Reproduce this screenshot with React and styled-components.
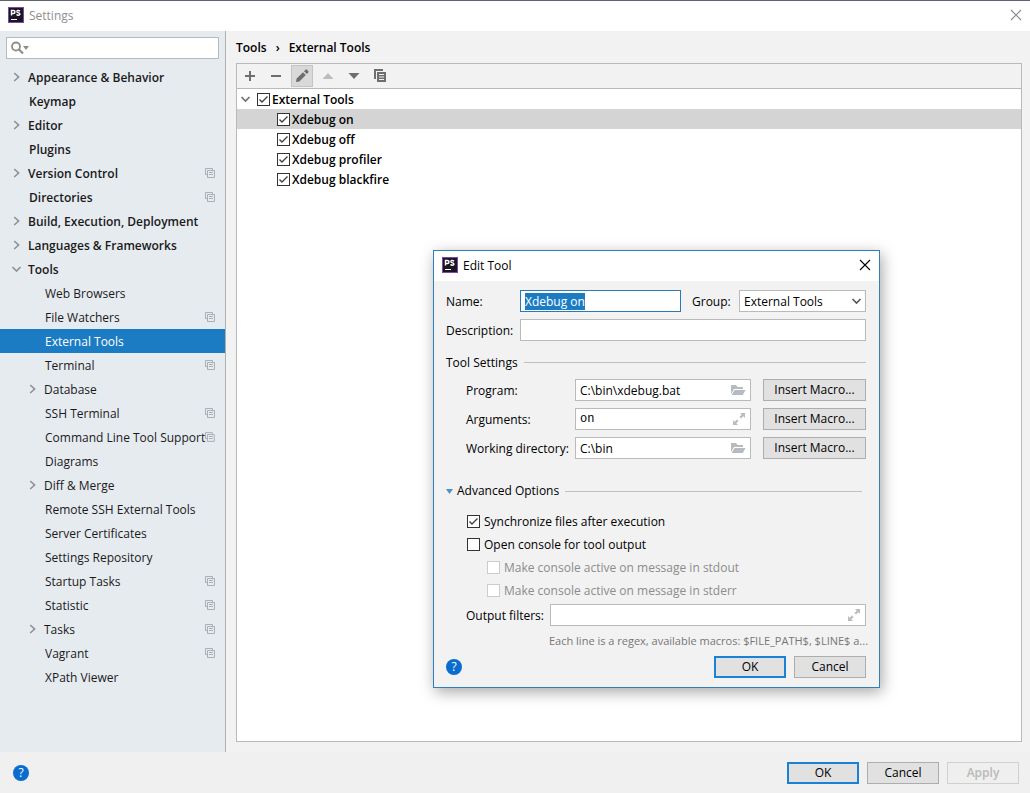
import React, { useState } from "react";
import styled, { createGlobalStyle, css } from "styled-components";

const GlobalStyle = createGlobalStyle`
  * {
    box-sizing: border-box;
  }
  body {
    margin: 0;
    background: #f0f0f0;
  }
  body, button, input, select {
    font-family: "Open Sans", "Noto Sans", sans-serif;
    font-size: 12px;
    line-height: 17px;
    color: #000000;
  }
  button {
    line-height: 16px;
  }
`;

const checkMark =
  "url(\"data:image/svg+xml,%3Csvg xmlns='http://www.w3.org/2000/svg' width='11' height='11'%3E%3Cpath d='M1.5 5.5L4 8L9.5 2.5' fill='none' stroke='%23404040' stroke-width='1.4'/%3E%3C/svg%3E\")";

const Window = styled.div`
  display: flex;
  flex-direction: column;
  min-height: 100vh;
  position: relative;
  border-top: 1px solid #5f6273;
`;

const TitleBar = styled.header`
  display: flex;
  align-items: center;
  gap: 5px;
  height: 30px;
  padding: 0 8px 2px;
  background: #ffffff;
  color: ${(props) => (props.$active ? "#000000" : "#8f8f8f")};
`;

const Title = styled.h1`
  flex: 1;
  margin: 0;
  font-size: 12px;
  font-weight: 400;
`;

const IconButton = styled.button`
  display: flex;
  align-items: center;
  justify-content: center;
  padding: 0;
  border: none;
  background: none;
`;

const Body = styled.div`
  display: flex;
  flex: 1;
`;

const Sidebar = styled.nav`
  flex: none;
  width: 226px;
  background: #e6ebf0;
  border-right: 1px solid #b0b0b0;
`;

const SearchBox = styled.div`
  display: flex;
  align-items: center;
  height: 22px;
  margin: 6px;
  padding-left: 4px;
  border: 1px solid #b4b8bf;
  background: #ffffff;
`;

const SearchInput = styled.input`
  flex: 1;
  min-width: 0;
  border: none;
  outline: none;
  background: none;
`;

const TreeList = styled.ul`
  list-style: none;
  margin: 0;
  padding: 0;
`;

const TreeItem = styled.li`
  display: flex;
  align-items: center;
  height: 24px;
  padding-left: ${(props) => (props.$level === 2 ? 26 : 10)}px;
  padding-right: 10px;
  font-weight: ${(props) => (props.$level === 2 ? 400 : 600)};
  white-space: nowrap;
  color: #1a1a1a;
  ${(props) =>
    props.$selected &&
    css`
      background: #1b7cc4;
      color: #ffffff;
    `}
`;

const TreeArrow = styled.span`
  display: flex;
  flex: none;
  width: ${(props) => (props.$leaf ? 19 : 18)}px;
`;

const TreeLabel = styled.span`
  flex: 1;
`;

const Content = styled.main`
  display: flex;
  flex-direction: column;
  flex: 1;
  padding: 8px 8px 10px 10px;
  background: #f2f2f2;
`;

const Breadcrumb = styled.div`
  display: flex;
  align-items: center;
  gap: 9px;
  height: 16px;
  margin-bottom: 8px;
  font-weight: 600;
`;

const Panel = styled.section`
  flex: 1;
  border: 1px solid #b9b9b9;
  background: #ffffff;
`;

const Toolbar = styled.div`
  display: flex;
  align-items: center;
  gap: 4px;
  height: 25px;
  padding: 0 2px;
  border-bottom: 1px solid #b9b9b9;
  background: #f2f2f2;
`;

const ToolButton = styled(IconButton)`
  width: 22px;
  height: 22px;
  ${(props) =>
    props.$pressed &&
    css`
      border: 1px solid #c4c4c4;
      background: #d9d9d9;
    `}
`;

const ToolRow = styled.div`
  display: flex;
  align-items: center;
  height: 20px;
  padding-left: ${(props) => (props.$child ? 40 : 2)}px;
  background: ${(props) => (props.$selected ? "#d4d4d4" : "none")};
  font-weight: 600;
`;

const RowArrow = styled.span`
  display: flex;
  width: 18px;
`;

const CheckLabel = styled.label`
  display: flex;
  align-items: center;
  gap: ${(props) => props.$gap || 2}px;
  padding-left: ${(props) => (props.$indent ? 20 : 0)}px;
  color: ${(props) => (props.$disabled ? "#8c8c8c" : "inherit")};
`;

const Checkbox = styled.input`
  appearance: none;
  flex: none;
  width: 13px;
  height: 13px;
  margin: 0;
  border: 1px solid #333333;
  background: #ffffff;
  &:checked {
    background: #ffffff ${checkMark} no-repeat center;
  }
  &:disabled {
    border-color: #cccccc;
  }
`;

const Footer = styled.footer`
  display: flex;
  align-items: center;
  gap: 8px;
  height: 41px;
  padding: 0 11px 0 13px;
  background: #f0f0f0;
`;

const HelpButton = styled.button`
  width: 16px;
  height: 16px;
  margin-right: auto;
  padding: 0;
  border: none;
  border-radius: 50%;
  background: #0a6cce;
  color: #ffffff;
`;

const Button = styled.button`
  width: ${(props) => (props.$wide ? 103 : 72)}px;
  height: 22px;
  padding: 0;
  border: ${(props) => (props.$primary ? "2px solid #1a82d4" : "1px solid #adadad")};
  background: #e1e1e1;
  &:disabled {
    border-color: #d0d0d0;
    background: #efefef;
    color: #b9b9b9;
    font-weight: 600;
  }
`;

const Dialog = styled.div`
  position: absolute;
  left: 433px;
  top: 249px;
  width: 447px;
  border: 1px solid #2f7fbd;
  background: #f2f2f2;
  box-shadow: 2px 4px 14px rgba(0, 0, 0, 0.35);
`;

const DialogForm = styled.form`
  padding: 9px 13px 9px 12px;
`;

const FormRow = styled.div`
  display: grid;
  grid-template-columns: ${(props) => props.$columns};
  align-items: center;
  height: 22px;
  margin-bottom: 7px;
  padding-left: ${(props) => (props.$indent ? 20 : 0)}px;
  white-space: nowrap;
`;

const GroupLabel = styled.label`
  padding-left: 11px;
`;

const MacroCell = styled.div`
  display: flex;
  justify-content: flex-end;
`;

const SectionTitle = styled.div`
  display: flex;
  align-items: center;
  gap: 6px;
  height: 16px;
  margin: ${(props) => (props.$advanced ? "24px 4px 14px 0" : "13px 0 9px")};
  &::after {
    content: "";
    flex: 1;
    border-top: 1px solid #c0c0c0;
  }
`;

const SectionToggle = styled(IconButton)`
  gap: 4px;
`;

const Field = styled.div`
  display: flex;
  align-items: center;
  min-width: 0;
  height: 22px;
  padding-right: 4px;
  border: 1px solid ${(props) => (props.$focused ? "#2b7ab8" : "#bababa")};
  background: #ffffff;
  svg {
    flex: none;
  }
`;

const TextInput = styled.input`
  flex: 1;
  min-width: 0;
  padding: 0 4px;
  border: none;
  outline: none;
  background: none;
  font-family: ${(props) => (props.$mono ? '"Liberation Mono", monospace' : '"Open Sans", "Noto Sans", sans-serif')};
  &::selection {
    background: #1b7cc4;
    color: #ffffff;
  }
`;

const SelectWrap = styled.div`
  display: grid;
  align-items: center;
  position: relative;
  svg {
    position: absolute;
    right: 4px;
    pointer-events: none;
  }
`;

const Select = styled.select`
  appearance: none;
  height: 22px;
  padding: 0 4px;
  border: 1px solid #bababa;
  border-radius: 0;
  background: #ffffff;
`;

const OptionList = styled.div`
  display: grid;
  grid-auto-rows: 16px;
  gap: 7px;
  margin-bottom: 6px;
  padding-left: 21px;
`;

const Hint = styled.p`
  height: 16px;
  margin: -1px 0 8px 103px;
  white-space: nowrap;
  font-size: 11px;
  color: #777777;
`;

const DialogActions = styled.div`
  display: flex;
  align-items: center;
  gap: 8px;
`;

const AppLogo = () => (
  <svg width="16" height="16" viewBox="0 0 16 16">
    <rect width="16" height="16" fill="#7b4aa8" />
    <rect x="1" y="1" width="14" height="14" fill="#1c1524" />
    <path
      d="M3.5 8.5V3.5H5.5Q7 3.5 7 5T5.5 6.5H3.5M12 4.2Q11 3.3 9.8 3.5T9 5Q9.3 5.7 10.5 5.9T12 7.2Q11.8 8.2 10.4 8.2T8.6 7.4"
      fill="none"
      stroke="#ffffff"
      strokeWidth="1.4"
    />
    <rect x="3" y="12" width="6" height="1" fill="#ffffff" />
  </svg>
);

const CloseIcon = ({ color }) => (
  <svg width="12" height="12" viewBox="0 0 12 12">
    <path d="M1 1L11 11M11 1L1 11" stroke={color} strokeWidth="1.1" />
  </svg>
);

const Chevron = ({ open, color = "#8c9196" }) => (
  <svg width="12" height="12" viewBox="0 0 12 12">
    <path
      d={open ? "M2.5 4L6.5 8L10.5 4" : "M4.2 2L8.6 6L4.2 10"}
      fill="none"
      stroke={color}
      strokeWidth="1.6"
    />
  </svg>
);

const CopyIcon = () => (
  <svg width="10" height="10" viewBox="0 0 10 10">
    <path
      d="M2.5 6.5H0.5V0.5H7.5V2.5M2.5 2.5H9.5V9.5H2.5ZM4 4.5H8M4 6.5H8"
      fill="none"
      stroke="#a9afb5"
      strokeWidth="1"
    />
  </svg>
);

const SearchIcon = () => (
  <svg width="20" height="14" viewBox="0 0 20 14">
    <circle cx="5" cy="5.5" r="4" fill="none" stroke="#8c8c8c" strokeWidth="1.8" />
    <path d="M8 8.5L12 12.5" stroke="#8c8c8c" strokeWidth="2.2" />
    <path d="M12 5H18L15 9Z" fill="#8c8c8c" />
  </svg>
);

const ToolIcon = ({ children }) => (
  <svg width="16" height="16" viewBox="0 0 16 16" fill="#6e6e6e">
    {children}
  </svg>
);

const FolderIcon = () => (
  <svg width="16" height="14" viewBox="0 0 16 14" fill="#b5bbc0">
    <path d="M1 2H6L7.5 4H13V6H4L1 11Z" />
    <path d="M4.5 7H15.5L12.8 12H1.6Z" />
  </svg>
);

const ExpandIcon = () => (
  <svg width="14" height="14" viewBox="0 0 14 14" fill="#b9bdc1">
    <path d="M8 1H13V6L11.3 4.3L9 6.6L7.4 5L9.7 2.7Z" />
    <path d="M6 13H1V8L2.7 9.7L5 7.4L6.6 9L4.3 11.3Z" />
  </svg>
);

const settings = [
  { label: "Appearance & Behavior", arrow: "closed" },
  { label: "Keymap" },
  { label: "Editor", arrow: "closed" },
  { label: "Plugins" },
  { label: "Version Control", arrow: "closed", project: true },
  { label: "Directories", project: true },
  { label: "Build, Execution, Deployment", arrow: "closed" },
  { label: "Languages & Frameworks", arrow: "closed" },
  { label: "Tools", arrow: "open" },
  { label: "Web Browsers", level: 2 },
  { label: "File Watchers", level: 2, project: true },
  { label: "External Tools", level: 2, selected: true },
  { label: "Terminal", level: 2, project: true },
  { label: "Database", level: 2, arrow: "closed" },
  { label: "SSH Terminal", level: 2, project: true },
  { label: "Command Line Tool Support", level: 2, project: true },
  { label: "Diagrams", level: 2 },
  { label: "Diff & Merge", level: 2, arrow: "closed" },
  { label: "Remote SSH External Tools", level: 2 },
  { label: "Server Certificates", level: 2 },
  { label: "Settings Repository", level: 2 },
  { label: "Startup Tasks", level: 2, project: true },
  { label: "Statistic", level: 2, project: true },
  { label: "Tasks", level: 2, arrow: "closed", project: true },
  { label: "Vagrant", level: 2, project: true },
  { label: "XPath Viewer", level: 2 },
];

const tools = ["Xdebug on", "Xdebug off", "Xdebug profiler", "Xdebug blackfire"];

const toolFields = [
  { id: "program", label: "Program:", value: "C:\\bin\\xdebug.bat", icon: <FolderIcon /> },
  { id: "arguments", label: "Arguments:", value: "on", icon: <ExpandIcon />, mono: true },
  { id: "directory", label: "Working directory:", value: "C:\\bin", icon: <FolderIcon /> },
];

const EditToolDialog = () => {
  const [name, setName] = useState("Xdebug on");
  const [sync, setSync] = useState(true);
  const [openConsole, setOpenConsole] = useState(false);

  return (
    <Dialog role="dialog" aria-label="Edit Tool">
      <TitleBar $active>
        <AppLogo />
        <Title as="h2">Edit Tool</Title>
        <IconButton aria-label="Close dialog">
          <CloseIcon color="#000000" />
        </IconButton>
      </TitleBar>
      <DialogForm onSubmit={(event) => event.preventDefault()}>
        <FormRow $columns="74px minmax(0, 1fr) 58px 127px">
          <label htmlFor="name">Name:</label>
          <Field $focused>
            <TextInput
              id="name"
              autoFocus
              value={name}
              onFocus={(event) => event.target.select()}
              onChange={(event) => setName(event.target.value)}
            />
          </Field>
          <GroupLabel htmlFor="group">Group:</GroupLabel>
          <SelectWrap>
            <Select id="group">
              <option>External Tools</option>
            </Select>
            <Chevron open color="#555555" />
          </SelectWrap>
        </FormRow>
        <FormRow $columns="74px minmax(0, 1fr)">
          <label htmlFor="description">Description:</label>
          <Field>
            <TextInput id="description" />
          </Field>
        </FormRow>
        <SectionTitle>Tool Settings</SectionTitle>
        {toolFields.map((field) => (
          <FormRow key={field.id} $indent $columns="109px minmax(0, 1fr) 115px">
            <label htmlFor={field.id}>{field.label}</label>
            <Field>
              <TextInput id={field.id} defaultValue={field.value} $mono={field.mono} />
              {field.icon}
            </Field>
            <MacroCell>
              <Button type="button" $wide>
                Insert Macro...
              </Button>
            </MacroCell>
          </FormRow>
        ))}
        <SectionTitle $advanced>
          <SectionToggle type="button">
            <svg width="7" height="5" viewBox="0 0 7 5">
              <path d="M0 0H7L3.5 5Z" fill="#4a93c4" />
            </svg>
            Advanced Options
          </SectionToggle>
        </SectionTitle>
        <OptionList>
          <CheckLabel $gap={4}>
            <Checkbox
              type="checkbox"
              checked={sync}
              onChange={(event) => setSync(event.target.checked)}
            />
            Synchronize files after execution
          </CheckLabel>
          <CheckLabel $gap={4}>
            <Checkbox
              type="checkbox"
              checked={openConsole}
              onChange={(event) => setOpenConsole(event.target.checked)}
            />
            Open console for tool output
          </CheckLabel>
          {["stdout", "stderr"].map((stream) => (
            <CheckLabel key={stream} $gap={4} $indent $disabled={!openConsole}>
              <Checkbox type="checkbox" disabled={!openConsole} />
              Make console active on message in {stream}
            </CheckLabel>
          ))}
        </OptionList>
        <FormRow $indent $columns="84px minmax(0, 1fr)">
          <label htmlFor="filters">Output filters:</label>
          <Field>
            <TextInput id="filters" />
            <ExpandIcon />
          </Field>
        </FormRow>
        <Hint>Each line is a regex, available macros: $FILE_PATH$, $LINE$ a...</Hint>
        <DialogActions>
          <HelpButton type="button">?</HelpButton>
          <Button type="submit" $primary>
            OK
          </Button>
          <Button type="button">Cancel</Button>
        </DialogActions>
      </DialogForm>
    </Dialog>
  );
};

export default function App() {
  return (
    <>
      <GlobalStyle />
      <Window>
        <TitleBar>
          <AppLogo />
          <Title>Settings</Title>
          <IconButton aria-label="Close">
            <CloseIcon color="#8a8a8a" />
          </IconButton>
        </TitleBar>
        <Body>
          <Sidebar>
            <SearchBox>
              <SearchIcon />
              <SearchInput type="text" aria-label="Search settings" />
            </SearchBox>
            <TreeList>
              {settings.map((item) => (
                <TreeItem key={item.label} $level={item.level} $selected={item.selected}>
                  <TreeArrow $leaf={!item.arrow}>
                    {item.arrow && <Chevron open={item.arrow === "open"} />}
                  </TreeArrow>
                  <TreeLabel>{item.label}</TreeLabel>
                  {item.project && <CopyIcon />}
                </TreeItem>
              ))}
            </TreeList>
          </Sidebar>
          <Content>
            <Breadcrumb>
              <span>Tools</span>
              <span>›</span>
              <span>External Tools</span>
            </Breadcrumb>
            <Panel>
              <Toolbar>
                <ToolButton aria-label="Add">
                  <ToolIcon>
                    <path d="M7 3H9V7H13V9H9V13H7V9H3V7H7Z" />
                  </ToolIcon>
                </ToolButton>
                <ToolButton aria-label="Remove">
                  <ToolIcon>
                    <path d="M3 7H13V9H3Z" />
                  </ToolIcon>
                </ToolButton>
                <ToolButton aria-label="Edit" $pressed>
                  <ToolIcon>
                    <path d="M2 14L2.6 10.6L9 4.2L11.8 7L5.4 13.4ZM10 3.2L11.6 1.6Q12.2 1.2 12.8 1.6L14.4 3.2Q14.8 3.8 14.4 4.4L12.8 6Z" />
                  </ToolIcon>
                </ToolButton>
                <ToolButton aria-label="Move up">
                  <ToolIcon>
                    <path d="M2.5 11H13.5L8 5Z" fill="#bcbcbc" />
                  </ToolIcon>
                </ToolButton>
                <ToolButton aria-label="Move down">
                  <ToolIcon>
                    <path d="M2.5 5H13.5L8 11Z" />
                  </ToolIcon>
                </ToolButton>
                <ToolButton aria-label="Copy">
                  <ToolIcon>
                    <path d="M2 1H11V3H4V11H2Z" />
                    <path
                      d="M5 4H14V14H5ZM7 6V7H12V6ZM7 8.5V9.5H12V8.5ZM7 11V12H12V11Z"
                      fillRule="evenodd"
                    />
                  </ToolIcon>
                </ToolButton>
              </Toolbar>
              <ToolRow>
                <RowArrow>
                  <Chevron open color="#6e6e6e" />
                </RowArrow>
                <CheckLabel>
                  <Checkbox type="checkbox" defaultChecked />
                  External Tools
                </CheckLabel>
              </ToolRow>
              {tools.map((tool, index) => (
                <ToolRow key={tool} $child $selected={index === 0}>
                  <CheckLabel>
                    <Checkbox type="checkbox" defaultChecked />
                    {tool}
                  </CheckLabel>
                </ToolRow>
              ))}
            </Panel>
          </Content>
        </Body>
        <Footer>
          <HelpButton>?</HelpButton>
          <Button $primary>OK</Button>
          <Button>Cancel</Button>
          <Button disabled>Apply</Button>
        </Footer>
        <EditToolDialog />
      </Window>
    </>
  );
}
